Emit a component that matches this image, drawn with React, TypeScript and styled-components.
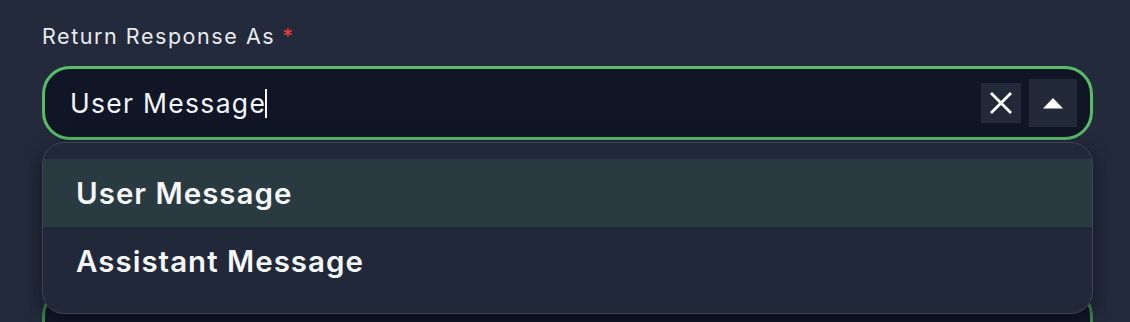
import React from "react";
import styled, { createGlobalStyle } from "styled-components";

const Global = createGlobalStyle`
  html, body { margin: 0; padding: 0; background: #222a3b; }
  body { font-family: Inter, "Noto Sans", sans-serif; overflow: hidden; }
`;

const Page = styled.div`
  width: 1130px;
  height: 322px;
  box-sizing: border-box;
  padding: 22px 37px 0 42px;
  position: relative;
  overflow: hidden;
  background: #222a3b;
`;

const Field = styled.div`
  display: flex;
  flex-direction: column;
  position: relative;
`;

const Label = styled.label`
  font-size: 21.5px;
  line-height: 28px;
  color: #e8eaee;
  font-weight: 400;
  letter-spacing: 1.55px;
  margin-bottom: 16px;
`;

const Required = styled.span`
  color: #ef3b35;
  margin-left: 7px;
`;

const InputBox = styled.div<{ $dim?: boolean }>`
  height: 74px;
  box-sizing: border-box;
  border: 3.5px solid ${(p) => (p.$dim ? "#3f8a4d" : "#58bd66")};
  border-radius: 28px;
  background: #111627;
  display: flex;
  align-items: center;
  padding: 0 13px 0 25px;
  gap: 8px;
`;

const Value = styled.div`
  flex: 1;
  font-size: 26.5px;
  color: #f4f5f7;
  display: flex;
  align-items: center;
  letter-spacing: 1.3px;
`;

const Caret = styled.span`
  display: inline-block;
  width: 2px;
  height: 29px;
  background: #f4f5f7;
  margin-left: -1px;
`;

const IconButton = styled.button<{ $size: number }>`
  width: ${(p) => p.$size}px;
  height: ${(p) => p.$size}px;
  border: none;
  padding: 0;
  background: #222a3a;
  display: flex;
  align-items: center;
  justify-content: center;
  color: #ffffff;
`;

const Menu = styled.div`
  position: absolute;
  left: 42px;
  top: 142px;
  width: 1051px;
  height: 172px;
  box-sizing: border-box;
  border: 1.5px solid #3d4455;
  border-radius: 22px;
  background: #202839;
  padding: 16px 0 0;
  box-shadow: 0 6px 18px rgba(8, 10, 18, 0.55);
  z-index: 2;
`;

const Option = styled.div<{ $active?: boolean }>`
  height: 68px;
  display: flex;
  align-items: center;
  padding-left: 33px;
  font-size: 29.5px;
  font-weight: 600;
  letter-spacing: 1px;
  color: #f5f6f8;
  background: ${(p) => (p.$active ? "#293b40" : "transparent")};
`;

const Second = styled.div`
  margin-top: 148px;
`;

export default function App() {
  return (
    <Page>
      <Global />
      <Field>
        <Label>
          Return Response As<Required>*</Required>
        </Label>
        <InputBox>
          <Value>
            User Message
            <Caret />
          </Value>
          <IconButton $size={40}>
            <svg width="24" height="24" viewBox="0 0 24 24">
              <path d="M2 2 L22 22 M22 2 L2 22" stroke="#fff" strokeWidth="2.8" strokeLinecap="butt" />
            </svg>
          </IconButton>
          <IconButton $size={48}>
            <svg width="20" height="11" viewBox="0 0 20 11">
              <path d="M10 0 L20 10.5 L0 10.5 Z" fill="#fff" />
            </svg>
          </IconButton>
        </InputBox>
      </Field>
      <Second>
        <InputBox $dim />
      </Second>
      <Menu>
        <Option $active>User Message</Option>
        <Option>Assistant Message</Option>
      </Menu>
    </Page>
  );
}
